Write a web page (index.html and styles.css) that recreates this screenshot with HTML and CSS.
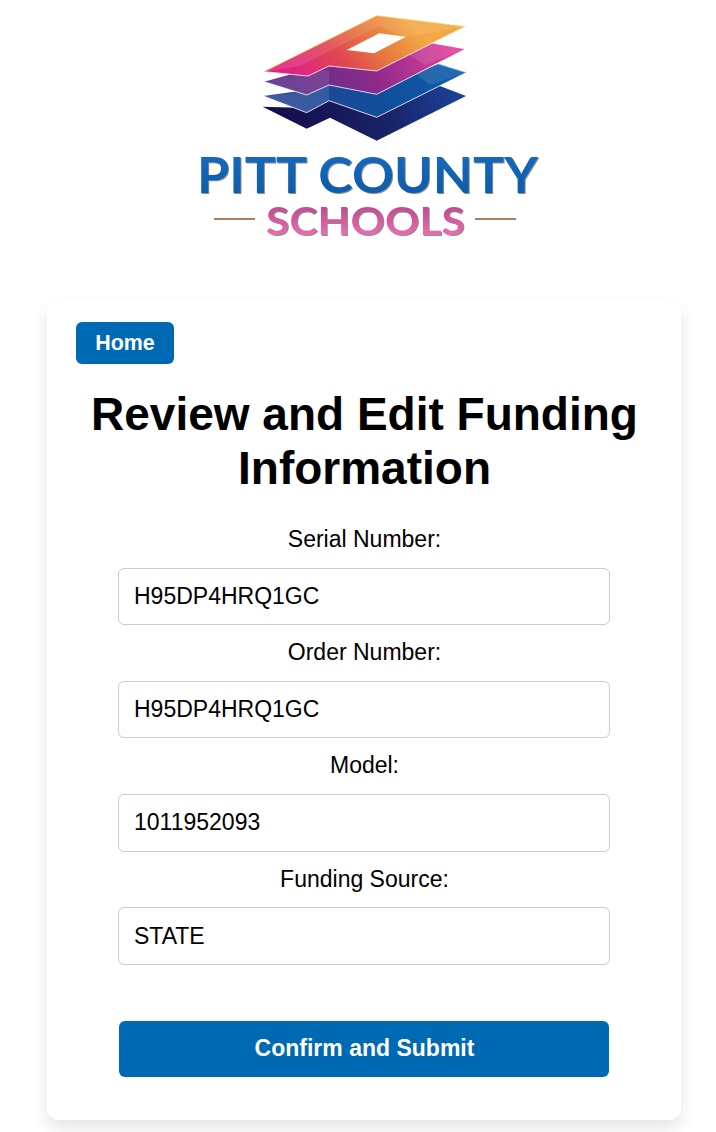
FILE: index.html
```html
<!DOCTYPE html>
<html lang="en">
<head>
<meta charset="utf-8">
<title>Review and Edit Funding Information</title>
<link rel="stylesheet" href="styles.css">
</head>
<body>
<div class="page">
  <header class="logo-wrap">
    <svg class="logo" viewBox="184 0 360 300" role="img" aria-label="Pitt County Schools">
      <defs>
        <linearGradient id="gTop" x1="310" y1="85" x2="400" y2="10" gradientUnits="userSpaceOnUse">
          <stop offset="0" stop-color="#e0257f"/><stop offset="0.35" stop-color="#e0474f"/><stop offset="0.7" stop-color="#e97f3f"/><stop offset="1" stop-color="#f3a843"/>
        </linearGradient>
        <linearGradient id="gPink" x1="300" y1="95" x2="450" y2="45" gradientUnits="userSpaceOnUse">
          <stop offset="0" stop-color="#5f2e88"/><stop offset="0.5" stop-color="#8f2a8c"/><stop offset="1" stop-color="#e1409a"/>
        </linearGradient>
        <linearGradient id="gBlue" x1="280" y1="100" x2="450" y2="70" gradientUnits="userSpaceOnUse">
          <stop offset="0" stop-color="#2c4594"/><stop offset="0.5" stop-color="#124c98"/><stop offset="1" stop-color="#0d5aa8"/>
        </linearGradient>
        <linearGradient id="gNavy" x1="290" y1="130" x2="450" y2="90" gradientUnits="userSpaceOnUse">
          <stop offset="0" stop-color="#150f4e"/><stop offset="0.6" stop-color="#1a2368"/><stop offset="1" stop-color="#1b3f94"/>
        </linearGradient>
        <linearGradient id="gName" x1="0" y1="157" x2="0" y2="194" gradientUnits="userSpaceOnUse">
          <stop offset="0" stop-color="#1668bd"/><stop offset="1" stop-color="#0f5ca8"/>
        </linearGradient>
        <linearGradient id="gSchools" x1="0" y1="208" x2="0" y2="236" gradientUnits="userSpaceOnUse">
          <stop offset="0" stop-color="#c24d90"/><stop offset="1" stop-color="#ea6fae"/>
        </linearGradient>
      </defs>
      <g class="mark">
        <polygon fill="url(#gNavy)" points="262.7,106.7 306.7,128.7 330,117.7 376.7,140.7 466,96 436,84.5 376.7,110 329,96 307,108"/>
        <polygon fill="url(#gBlue)" points="263.3,96 306.7,112.7 329,100.7 376.7,117.3 466,72.7 438,64 376.7,90 329,80 307,90"/>
        <polygon class="facet" points="263.3,96 306.7,112.7 329,100.7 329,85 307,92"/>
        <polygon class="facet" points="430,85 466,72.7 438,64 414,72"/>
        <polyline class="line-white" points="263.3,96 306.7,112.7 329,100.7 376.7,117.3 466,72.7"/>
        <polyline class="line-sky" points="438,64 466,72.7"/>
        <polygon fill="url(#gPink)" points="264,81.7 306.7,95 329,85 376.7,94.3 465,49.3 430,43 376.7,68 329,60 307,70"/>
        <polygon class="facet" points="264,81.7 306.7,95 329,85 329,70 307,72"/>
        <polygon class="facet" points="425,65 465,49.3 430,43 408,54"/>
        <polyline class="line-white" points="264,81.7 306.7,95 329,85 376.7,94.3 465,49.3"/>
        <path fill="url(#gTop)" fill-rule="evenodd" d="M376.7 15.7 465 26.7 376.7 71 329 66 308 76 264 71.7ZM379.3 33.3 346.7 50 374 53.3 406 36.7Z"/>
        <polygon class="facet-soft" points="376.7,15.7 465,26.7 406,36.7 379.3,26 300,66 264,71.7"/>
        <polyline class="line-white" points="264,71.7 308,76 329,66 376.7,71 465,26.7"/>
        <polyline class="line-gold" points="264,71.7 376.7,15.7 465,26.7"/>
      </g>
      <text class="name" fill="url(#gName)" x="197" y="193" textLength="341" lengthAdjust="spacingAndGlyphs">PITT COUNTY</text>
      <rect class="rule" x="214" y="218" width="41" height="2"/>
      <rect class="rule" x="475" y="218" width="41" height="2"/>
      <text class="schools" fill="url(#gSchools)" x="266" y="235" textLength="199" lengthAdjust="spacingAndGlyphs">SCHOOLS</text>
    </svg>
  </header>
  <main class="card">
    <a class="home-btn" href="#">Home</a>
    <h1 class="title">Review and Edit Funding Information</h1>
    <form class="form">
      <label class="field-label" for="serial">Serial Number:</label>
      <input class="field-input" id="serial" type="text" value="H95DP4HRQ1GC">
      <label class="field-label" for="order">Order Number:</label>
      <input class="field-input" id="order" type="text" value="H95DP4HRQ1GC">
      <label class="field-label" for="model">Model:</label>
      <input class="field-input" id="model" type="text" value="1011952093">
      <label class="field-label" for="source">Funding Source:</label>
      <input class="field-input" id="source" type="text" value="STATE">
      <button class="submit-btn" type="button">Confirm and Submit</button>
    </form>
  </main>
</div>
</body>
</html>
```
FILE: styles.css
```css
* { box-sizing: border-box; }
html, body { margin: 0; background: #fff; }
body { font-family: "Liberation Sans", Arial, sans-serif; color: #000; }
.page { margin: 0 35px 12px 47px; }
.logo-wrap { display: flex; justify-content: center; height: 300px; }
.logo { display: block; width: 360px; height: 300px; }
.mark { filter: blur(0.35px); }
.facet { fill: #fff; opacity: 0.1; }
.facet-soft { fill: #fff; opacity: 0.1; }
.line-white { fill: none; stroke: #fff; stroke-width: 0.8; stroke-linejoin: round; }
.line-sky { fill: none; stroke: #5fb3e8; stroke-width: 0.8; }
.line-gold { fill: none; stroke: #f0d040; stroke-width: 0.7; stroke-linejoin: round; }
.name {
  font-family: Lato, "Liberation Sans", sans-serif;
  font-size: 50px;
  font-weight: 700;
  filter: drop-shadow(1px 1px 0.6px rgba(70, 80, 95, 0.65));
}
.schools {
  font-family: Lato, "Liberation Sans", sans-serif;
  font-size: 39px;
  font-weight: 700;
  filter: drop-shadow(1px 1px 0.6px rgba(90, 70, 85, 0.65));
}
.rule { fill: #b07d5e; }
.card {
  height: 820px;
  padding: 22px 29px 0;
  background: #fff;
  border-radius: 12px;
  box-shadow: 0 8px 16px rgba(0, 0, 0, 0.1);
}
.home-btn {
  display: flex;
  align-items: center;
  justify-content: center;
  width: 98px;
  height: 42px;
  background: #0069b3;
  border-radius: 6px;
  color: #fff;
  font-size: 21.4px;
  font-weight: 700;
  text-decoration: none;
}
.title {
  margin: 23px 0 0;
  padding-left: 1px;
  font-size: 46px;
  line-height: 54px;
  font-weight: 700;
  text-align: center;
}
.form {
  display: flex;
  flex-direction: column;
  align-items: center;
  margin-top: 31px;
}
.field-label {
  display: block;
  padding-left: 1px;
  font-size: 23px;
  line-height: 26px;
  margin-top: 14px;
  margin-bottom: 15.8px;
}
.field-label:first-child { margin-top: 0; }
.field-input {
  width: 492px;
  height: 57.4px;
  padding: 0 15px;
  border: 1px solid #ccc;
  border-radius: 6px;
  font-family: "Liberation Sans", Arial, sans-serif;
  font-size: 23px;
  color: #000;
  background: #fff;
}
.submit-btn {
  width: 490px;
  height: 56px;
  margin-top: 56.2px;
  padding: 0 0 0 1px;
  border: 0;
  border-radius: 6px;
  background: #0069b3;
  color: #fff;
  font-family: "Liberation Sans", Arial, sans-serif;
  font-size: 23px;
  font-weight: 700;
}
```
